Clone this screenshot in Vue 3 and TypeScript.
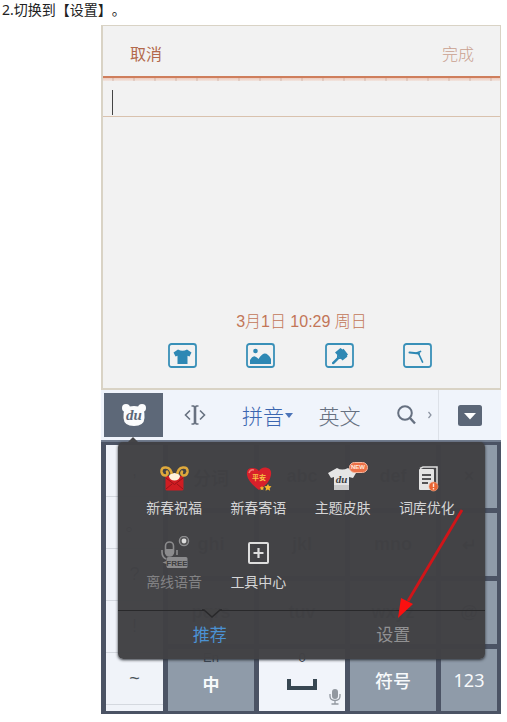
<script setup lang="ts">
import { ref } from 'vue'

interface Key { label: string; sub?: string; kind?: string }
interface Tool { id: string; label: string; dim?: boolean }

const note = ref('')
const attachments = [
  { id: 'skin', name: '皮肤' },
  { id: 'photo', name: '图片' },
  { id: 'brush', name: '画笔' },
  { id: 'clock', name: '提醒' },
]
const tools: Tool[] = [
  { id: 'bless', label: '新春祝福' },
  { id: 'heart', label: '新春寄语' },
  { id: 'theme', label: '主题皮肤' },
  { id: 'dict', label: '词库优化' },
  { id: 'voice', label: '离线语音', dim: true },
  { id: 'center', label: '工具中心' },
]
const punctuation = [',', '。', '?', '!', '~']
const keys: Key[] = [
  { label: '分词' }, { label: 'abc' }, { label: 'def' }, { label: '×' },
  { label: 'ghi' }, { label: 'jkl' }, { label: 'mno' }, { label: '↵' },
  { label: 'pqrs' }, { label: 'tuv' }, { label: 'wxyz' }, { label: '@' },
  { label: '中', sub: 'En', kind: 'strong' },
  { label: '', sub: '0', kind: 'space' },
  { label: '符号', kind: 'symbol' },
  { label: '123', kind: 'number' },
]
</script>

<template>
  <main class="page">
    <p class="step">2.切换到【设置】。</p>
    <div class="phone">
      <section class="note">
        <header class="note-head">
          <button class="cancel">取消</button>
          <button class="done">完成</button>
        </header>
        <div class="perforation"></div>
        <label class="note-line">
          <span class="caret"></span>
          <input v-model="note" aria-label="便签内容" />
        </label>
        <div class="sheet"></div>
        <time class="date">3月1日 10:29 周日</time>
        <div class="attachments">
          <button v-for="a in attachments" :key="a.id" :aria-label="a.name">
            <svg width="29" height="25" viewBox="0 0 29 25">
              <rect x="1" y="1" width="27" height="23" rx="2.5" fill="none" stroke="#3990b8" stroke-width="1.8" />
              <path v-if="a.id === 'skin'" d="M10 6.500q4.500 2.500 9 0l4.500 3-2 4-2-.8V21H9.500v-8.300l-2 .8-2-4z" fill="#2e88b4" />
              <g v-else-if="a.id === 'photo'" fill="#2e88b4">
                <circle cx="9.500" cy="8" r="2.300" />
                <path d="M4 21v-4q2.500-4.500 5-3.500 2 .5 3.500 2.500 3-5 6-5.500 3.500-.3 6.500 5.500v5z" />
              </g>
              <g v-else-if="a.id === 'brush'" fill="#2e88b4">
                <path d="M15.500 5l2 1.500 1-.8 4.500 5.800-1 1 .3 1.300-4.800 3.700-7.500-8z" />
                <path d="M12 11.500l4.500 4.500-2.500 0-5 5q-2.500 1-2-1.500l5-5z" />
              </g>
              <g v-else fill="none" stroke="#2e88b4" stroke-linecap="round">
                <path d="M6.500 9.500l9.500 1" stroke-width="2" />
                <path d="M13.500 10l4-1.500M15.500 10.500l4 8.500" stroke-width="1.700" />
              </g>
            </svg>
          </button>
        </div>
      </section>

      <nav class="toolbar">
        <button class="du" aria-label="百度输入法">
          <svg width="26" height="24" viewBox="0 0 26 24">
            <g fill="#fbfcfd">
              <circle cx="5" cy="5" r="4" /><circle cx="21" cy="5" r="4" />
              <path d="M4 5q9-4 18 0 2 5 1.500 10-.5 8-10.500 8T2.500 15Q2 10 4 5z" />
            </g>
            <text x="13" y="17" text-anchor="middle" class="du-text">du</text>
          </svg>
        </button>
        <button class="cursor" aria-label="光标">
          <svg width="22" height="20" viewBox="0 0 22 20" fill="none" stroke="#687180" stroke-width="1.600">
            <path d="M6 5.500L1.500 10 6 14.500M16 5.500l4.500 4.500-4.500 4.500M7.500 1h2l1.500 1 1.500-1h2M7.500 19h2l1.500-1 1.500 1h2" />
            <path d="M11 2v16" stroke-width="2.600" />
          </svg>
        </button>
        <button class="pinyin">拼音<i></i></button>
        <button class="english">英文</button>
        <button class="search" aria-label="搜索">
          <svg width="38" height="22" viewBox="0 0 38 22" fill="none" stroke="#667080">
            <circle cx="9" cy="9" r="6.800" stroke-width="2" />
            <path d="M14 14l5 5.500" stroke-width="2.400" />
            <path d="M32.500 8l2.500 3-2.500 3" stroke-width="1.200" stroke="#8a92a0" />
          </svg>
        </button>
        <button class="fold" aria-label="收起">
          <svg width="24" height="21" viewBox="0 0 24 21">
            <rect width="24" height="21" rx="2.500" fill="#5b6677" />
            <path d="M6 8h12l-6 6.500z" fill="#fff" />
          </svg>
        </button>
      </nav>

      <section class="keyboard">
        <div class="side">
          <button v-for="p in punctuation" :key="p">{{ p }}</button>
        </div>
        <button v-for="(k, i) in keys" :key="i" class="key" :class="k.kind ?? 'letters'">
          <small v-if="k.sub">{{ k.sub }}</small>
          <template v-if="k.kind === 'space'">
            <svg width="30" height="12" viewBox="0 0 30 12"><path d="M2 1v9h26V1" fill="none" stroke="#384752" stroke-width="4" /></svg>
            <svg class="mic" width="12" height="16" viewBox="0 0 12 16">
              <rect x="3" y="0" width="6" height="10" rx="3" fill="#9298a0" />
              <path d="M1 5v2q0 4.500 5 4.500t5-4.500V5M6 11v4M2.500 15h7" fill="none" stroke="#9298a0" stroke-width="1.300" />
            </svg>
          </template>
          <span v-else>{{ k.label }}</span>
        </button>

        <div class="panel">
          <div class="tools">
            <button v-for="t in tools" :key="t.id" class="tool" :class="{ dim: t.dim }">
              <svg width="36" height="34" viewBox="0 0 36 34">
                <g v-if="t.id === 'bless'">
                  <rect x="9.500" y="14" width="18" height="14.500" rx="1.500" fill="#d01c22" />
                  <path d="M10 27l6-5M27 27l-6-5M10 16l8.500 6.500L27 16" fill="none" stroke="#9a1219" stroke-width="1" />
                  <path d="M16 14Q15.500 6 10 5.500 5 5 5.500 10q1 4 4.500 3.500 2.500-1.500 1-4M21 14q.5-8 6-8.500 5-.5 4.500 4.500-1 4-4.500 3.500-2.500-1.500-1-4" fill="none" stroke="#dfa93c" stroke-width="2.600" stroke-linecap="round" />
                  <path d="M13 14.500q0-3 3-2.500 2.500-2 5 0 3-.5 3 2.500-1 4-5.500 4T13 14.500z" fill="#fff2dc" />
                </g>
                <g v-else-if="t.id === 'heart'">
                  <path d="M19 28Q8 20 7 13 6 6 12.500 6 17 6 19 9q2-4 7-3.500 6 1 5 7.500-1 8-12 15z" fill="#d8202a" />
                  <path d="M9 11q1-4 5-3" fill="none" stroke="#f37972" stroke-width="1.500" />
                  <text x="19" y="18" text-anchor="middle" class="heart-text">平安</text>
                  <path d="M28 22l1 2 2.500.3-1.800 1.900.4 2.600-2.200-1.200-2.300 1.200.4-2.600-1.700-1.900 2.500-.3zM22 24l.7 1.300 1.600.2-1.200 1.200.3 1.600-1.400-.8-1.400.8.3-1.600-1.200-1.200 1.600-.2z" fill="#f6b62b" />
                </g>
                <g v-else-if="t.id === 'theme'">
                  <path d="M12 6q5 3 11 0l8 5-3 5-4-1v13H9V15l-3 1-3-5z" fill="#e5e5e5" />
                  <path d="M9 23h15v5H9z" fill="#cacaca" />
                  <text x="16.500" y="21" text-anchor="middle" class="shirt-text">du</text>
                </g>
                <g v-else-if="t.id === 'dict'">
                  <path d="M11 6.500L14 5h14v17" fill="none" stroke="#ddd" stroke-width="1.500" />
                  <rect x="10" y="7" width="15" height="21" rx="1" fill="#e4e4e4" />
                  <path d="M13 13h9M13 17h9M13 21h6" stroke="#535355" stroke-width="1.800" />
                  <circle cx="24.500" cy="24.500" r="4.500" fill="#e86433" stroke="#f5ac8d" stroke-width=".6" />
                  <path d="M24.500 21.500v3.500M24.500 26v1.500" stroke="#ffe4d8" stroke-width="1.400" />
                </g>
                <g v-else-if="t.id === 'voice'">
                  <g fill="none" stroke="#8b8b8d" stroke-width="1.600">
                    <rect x="9.500" y="6" width="8" height="14" rx="4" />
                    <path d="M6 14v2q0 5 4 7M21 14v5" />
                  </g>
                  <path d="M9.500 13h8v3q0 4-4 4t-4-4z" fill="#8b8b8d" />
                  <circle cx="28" cy="5" r="4.600" fill="#565658" stroke="#8d8d8f" stroke-width="1.300" />
                  <circle cx="28" cy="5" r="2.400" fill="#ddd" />
                  <path d="M6.500 26.500l4-1.500v-2.500q0-1.500 2-1.500h17.500q1.500 0 1.500 1.500v8q0 1.500-1.500 1.500H12.500q-2 0-2-1.500V28z" fill="#8b8b8d" />
                  <text x="21" y="29.500" text-anchor="middle" class="free-text">FREE</text>
                </g>
                <g v-else fill="none" stroke="#dedede">
                  <rect x="9" y="7" width="19" height="20" rx="1" stroke-width="2" />
                  <path d="M13.500 17h10M18.500 12v10" stroke-width="2.200" />
                </g>
              </svg>
              <em v-if="t.id === 'theme'">NEW</em>
              <span>{{ t.label }}</span>
            </button>
          </div>
          <div class="tabs">
            <button class="active">推荐</button>
            <button>设置</button>
          </div>
          <svg class="notch" width="20" height="10" viewBox="0 0 20 10"><path d="M1 0h18l-9 9z" fill="#424244" /><path d="M0 1h2l8 7 8-7h2" fill="none" stroke="#29292b" stroke-width="1.500" /></svg>
          <svg class="arrow" width="70" height="112" viewBox="0 0 70 112">
            <path d="M66 2L12 93" stroke="#d01519" stroke-width="2.800" />
            <path d="M2 110L5 90l12 6z" fill="#fb1010" />
          </svg>
        </div>
      </section>
    </div>
  </main>
</template>

<style>
body { margin: 0; background: #fff; }
</style>

<style scoped>
.page { font-family: "Liberation Sans", "Noto Sans CJK SC", sans-serif; }
button { border: 0; padding: 0; margin: 0; background: none; font: inherit; color: inherit; }
svg { display: block; }
.step { margin: 0; padding: 0 2px; height: 25px; line-height: 20px; font-size: 14px; font-family: "Noto Sans", "Noto Sans CJK SC", sans-serif; text-spacing-trim: space-all; font-kerning: none; color: #222; }
.phone { margin: 0 6px 8px 101px; }

.note { border: solid #d9d3c5; border-width: 1px 1px 2px 2px; background: #f2f2f2; }
.note-head { display: flex; justify-content: space-between; align-items: center; height: 52px; padding: 4px 26px 0 27px; box-sizing: border-box; border-bottom: 2px solid #cf7e5c; font-size: 16px; font-weight: 300; }
.cancel { color: #b3694c; font-weight: 400; }
.done { color: #c9a08f; }
.perforation { height: 3px; background: repeating-linear-gradient(90deg, transparent 0 9px, #b98f7d40 9px 11px, transparent 11px 21px), linear-gradient(#eecabc, #f1e6e1); }
.note-line { display: flex; align-items: center; height: 35px; padding: 0 9px; border-bottom: 1px solid #d9c2ae; }
.caret { width: 1px; height: 25px; margin-top: 8px; background: #444; }
.note-line input { flex: 1; min-width: 0; border: 0; outline: 0; background: none; font: inherit; }
.sheet { height: 193px; }
.date { display: block; text-align: center; font-size: 16px; line-height: 24px; font-weight: 300; color: #c27658; }
.attachments { display: flex; justify-content: space-between; padding: 9px 68px 20px 65px; }

.toolbar { display: grid; grid-template-columns: 62fr 64fr 77fr 71fr 64fr 62fr; height: 50px; background: #f0f4fb; color: #667080; font-size: 21px; font-weight: 300; }
.toolbar button { display: flex; align-items: center; justify-content: center; white-space: nowrap; }
.toolbar .du { margin: 3px 0 3px 3px; background: #5d6878; }
.du-text { font: italic bold 15px "Liberation Serif", serif; fill: #5d6878; }
.toolbar .pinyin { color: #3b66b0; gap: 1px; padding-left: 4px; }
.pinyin i { border: solid transparent; border-width: 5px 4px 0; border-top-color: #4c74b8; }
.toolbar .search { padding-left: 16px; border-right: 1px solid #dde1e8; }

.keyboard { position: relative; display: grid; grid-template-columns: 57fr 86fr 86fr 86fr 56fr; grid-template-rows: repeat(3, 63px) 62px; gap: 5px; padding: 3px 4px 3px 5px; background: #4b5364; border-top: 2px solid #737e90; }
.side { grid-row: 1 / 5; display: grid; grid-template-rows: repeat(5, 52px); background: #f0f3f9; }
.side button { border-bottom: 1px solid #d4d8df; font-size: 18px; color: #4c535c; }
.key { position: relative; display: flex; align-items: center; justify-content: center; background: #8f9ba9; color: #f7f9fb; font-size: 18px; }
.key.letters { color: #1d2228; font-weight: bold; }
.key small { position: absolute; top: 1px; left: 0; right: 0; text-align: center; font-size: 13px; line-height: 15px; font-weight: 400; color: #3c4653; }
.key.strong { font-size: 17px; font-weight: 700; padding-top: 7px; }
.key.space { background: #f1f4fa; padding-top: 8px; }
.key.symbol { font-weight: 500; }
.key.number { font-family: "Noto Sans", sans-serif; }
.mic { position: absolute; right: 4px; bottom: 6px; }

.panel { position: absolute; top: 0; left: 17px; right: 16px; height: 217px; display: flex; flex-direction: column; background: rgba(65, 65, 68, 0.98); border-radius: 5px; box-shadow: 0 1px 3px #2c3038; color: #d5d5d6; }
.panel::before { content: ""; position: absolute; left: 10px; top: -5px; border: solid transparent; border-width: 0 5px 5px; border-bottom-color: #444447; }
.tools { flex: 1; display: grid; grid-template-columns: repeat(4, 1fr); grid-template-rows: 74px 74px; padding: 20px 16px 0 14px; }
.tool { position: relative; display: flex; flex-direction: column; align-items: center; justify-content: flex-start; font-size: 14px; line-height: 20px; gap: 2px; white-space: nowrap; }
.tool.dim { color: #828284; }
.tool em { position: absolute; left: 48px; top: 0; width: 19px; line-height: 9px; border-radius: 6px; background: #ec7047; border: 1px solid #f4b79f; color: #ffe9dc; font-size: 6px; font-weight: bold; font-style: normal; box-sizing: border-box; text-align: center; }
.heart-text { font: bold 7px "Noto Sans CJK SC", sans-serif; fill: #f9c544; }
.shirt-text { font: italic bold 11px "Liberation Serif", serif; fill: #3d3d3f; }
.free-text { font: bold 8px "Liberation Sans", sans-serif; fill: #3d3d3f; }
.tabs { display: grid; grid-template-columns: 1fr 1fr; height: 50px; border-top: 1px solid #29292b; font-size: 17px; color: #919193; box-sizing: border-box; }
.tabs button { padding-bottom: 4px; }
.tabs .active { color: #4b91d2; }
.notch { position: absolute; left: 84px; top: 167px; }
.arrow { position: absolute; right: 19px; top: 66px; }
</style>
